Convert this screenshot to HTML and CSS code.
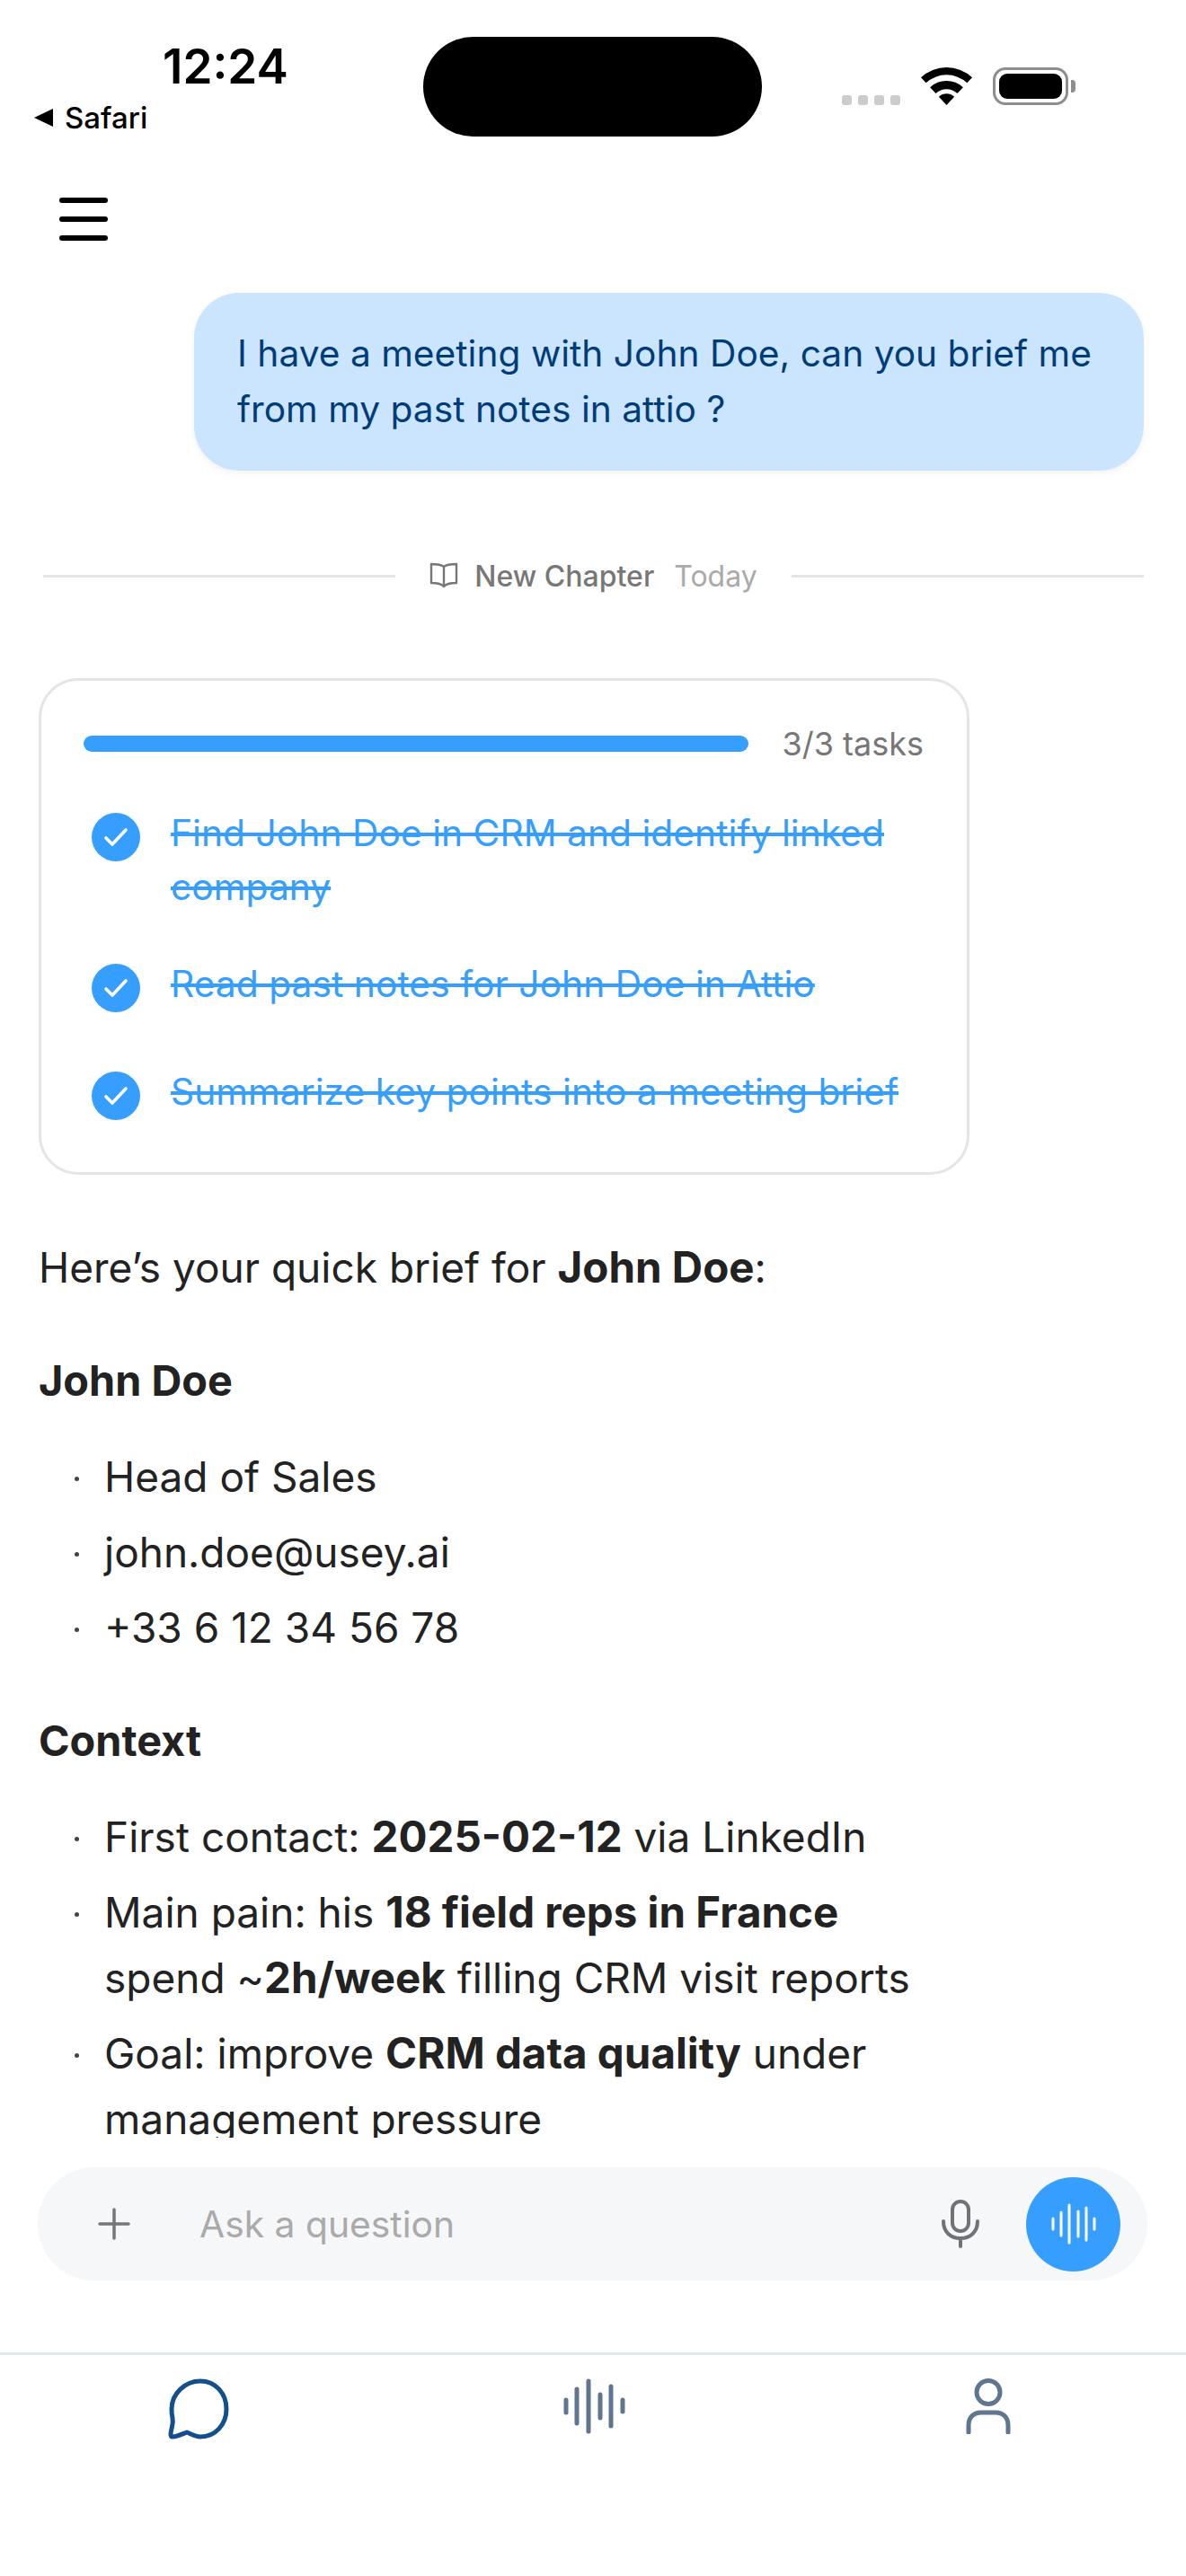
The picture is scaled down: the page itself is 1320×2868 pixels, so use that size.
FILE: index.html
```html
<!DOCTYPE html>
<html lang="en">
<head>
  <meta charset="UTF-8">
  <title>Chat</title>
  <link rel="stylesheet" href="styles.css">
</head>
<body>
  <div class="phone">
    <!-- Status bar -->
    <div class="status-bar">
      <div class="status-left">
        <div class="status-time">12:24</div>
        <div class="status-back"><span class="back-arrow"></span>Safari</div>
      </div>
      <div class="island"></div>
      <div class="status-right">
        <div class="signal"><span></span><span></span><span></span><span></span></div>
        <svg class="wifi" width="57" height="42" viewBox="0 0 57 42">
          <path d="M0 11.2A42 42 0 0 1 57 11.2L51.4 17.3A33.7 33.7 0 0 0 5.6 17.3Z"/>
          <path d="M10.1 22.2A27 27 0 0 1 46.9 22.2L40.5 29A17.7 17.7 0 0 0 16.5 29Z"/>
          <path d="M19.9 32.7A12.7 12.7 0 0 1 37.1 32.7L28.5 42Z"/>
        </svg>
        <div class="battery"><div class="battery-fill"></div></div>
        <div class="battery-nub"></div>
      </div>
    </div>

    <!-- Top bar -->
    <div class="top-bar">
      <div class="menu-btn"><span></span><span></span><span></span></div>
    </div>

    <!-- Conversation -->
    <div class="chat">
      <div class="user-msg">I have a meeting with John Doe, can you brief me from my past notes in attio ?</div>

      <div class="chapter">
        <div class="chapter-line"></div>
        <svg class="chapter-icon" width="32" height="30" viewBox="0 0 32 30" fill="none" stroke="#777" stroke-width="2.4" stroke-linejoin="round" stroke-linecap="round">
          <path d="M16 5C13 2.500 8 2 2 2V23C8 23 13 23.500 16 27C19 23.500 24 23 30 23V2C24 2 19 2.500 16 5ZM16 5V27"/>
        </svg>
        <span class="chapter-name">New Chapter</span>
        <span class="chapter-date">Today</span>
        <div class="chapter-line"></div>
      </div>

      <div class="task-card">
        <div class="task-progress">
          <div class="progress-bar"></div>
          <div class="progress-label">3/3 tasks</div>
        </div>
        <div class="task-row">
          <div class="task-check"><svg width="28" height="22" viewBox="0 0 28 22" fill="none" stroke="#fff" stroke-width="3.600" stroke-linecap="round" stroke-linejoin="round"><path d="M3 12L10 19L25 3"/></svg></div>
          <div class="task-text">Find John Doe in CRM and identify linked company</div>
        </div>
        <div class="task-row">
          <div class="task-check"><svg width="28" height="22" viewBox="0 0 28 22" fill="none" stroke="#fff" stroke-width="3.600" stroke-linecap="round" stroke-linejoin="round"><path d="M3 12L10 19L25 3"/></svg></div>
          <div class="task-text">Read past notes for John Doe in Attio</div>
        </div>
        <div class="task-row">
          <div class="task-check"><svg width="28" height="22" viewBox="0 0 28 22" fill="none" stroke="#fff" stroke-width="3.600" stroke-linecap="round" stroke-linejoin="round"><path d="M3 12L10 19L25 3"/></svg></div>
          <div class="task-text">Summarize key points into a meeting brief</div>
        </div>
      </div>

      <div class="answer">
        <p>Here’s your quick brief for <strong>John Doe</strong>:</p>
        <h3>John Doe</h3>
        <ul>
          <li>Head of Sales</li>
          <li>john.doe@usey.ai</li>
          <li>+33 6 12 34 56 78</li>
        </ul>
        <h3>Context</h3>
        <ul>
          <li>First contact: <strong>2025-02-12</strong> via LinkedIn</li>
          <li>Main pain: his <strong>18 field reps in France</strong> spend ~<strong>2h/week</strong> filling CRM visit reports</li>
          <li>Goal: improve <strong>CRM data quality</strong> under management pressure</li>
        </ul>
      </div>
    </div>

    <!-- Composer -->
    <div class="composer">
      <svg class="plus-icon" width="36" height="36" viewBox="0 0 36 36" stroke="#777" stroke-width="3.500" stroke-linecap="round"><path d="M18 2V34M2 18H34"/></svg>
      <div class="composer-input">Ask a question</div>
      <svg class="mic-icon" width="42" height="54" viewBox="0 0 42 54" fill="none" stroke="#6f7378" stroke-width="4" stroke-linecap="round">
        <rect x="12" y="2" width="18" height="33" rx="9"/>
        <path d="M2 24C2 36 10 43 21 43C32 43 40 36 40 24M21 43V52"/>
      </svg>
      <div class="voice-btn">
        <svg width="50" height="46" viewBox="0 0 50 46" stroke="#fff" stroke-width="3" stroke-linecap="round">
          <path d="M2 17V29M11 10V36M20 2V44M30 9V37M39 5V41M48 17V29"/>
        </svg>
      </div>
    </div>

    <!-- Tab bar -->
    <div class="tab-bar">
      <svg class="tab-icon" width="68" height="68" viewBox="0 0 68 68" fill="none" stroke="#134f8c" stroke-width="5" stroke-linejoin="round">
        <path d="M36 3C53 3 65 17 65 34C65 51 53 65 36 65C30 65 26 62 21 60C16 62 10 65 5 65C2 65 3 60 4 56C5 52 6 49 5 44C4 40 4 37 4 34C4 17 19 3 36 3Z"/>
      </svg>
      <svg class="tab-icon tab-wave" width="70" height="62" viewBox="0 0 70 62" stroke="#5f7590" stroke-width="5" stroke-linecap="round">
        <path d="M3 24V38M15 12V50M28 3V59M41 18V44M53 9V53M66 24V37"/>
      </svg>
      <svg class="tab-icon" width="50" height="62" viewBox="0 0 50 62" fill="none" stroke="#5f7590" stroke-width="5" stroke-linecap="round">
        <circle cx="25" cy="15.500" r="13"/>
        <path d="M3 60V52C3 43 9 38 17 38H33C41 38 47 43 47 52V60"/>
      </svg>
    </div>
  </div>
</body>
</html>
```

FILE: styles.css
```css
:root {
  --blue: #369eff;
  --ink: #222;
  --line: #e5e5e5;
}

html, body {
  margin: 0;
  padding: 0;
  background: #fff;
  font-family: 'Inter', 'Liberation Sans', sans-serif;
  color: var(--ink);
}

.phone {
  width: 1320px;
  height: 2868px;
  display: flex;
  flex-direction: column;
  overflow: hidden;
}

/* Status bar */
.status-bar {
  height: 190px;
  flex-shrink: 0;
  display: flex;
  align-items: flex-start;
}

.status-left {
  width: 471px;
  flex-shrink: 0;
  padding-top: 43px;
  box-sizing: border-box;
}

.status-time {
  margin-left: 181px;
  font-size: 53px;
  line-height: 62px;
  font-weight: 600;
  color: #000;
}

.status-back {
  display: flex;
  align-items: center;
  margin-top: 7px;
  margin-left: 38px;
  font-size: 33px;
  line-height: 38px;
  font-weight: 500;
  color: #000;
}

.back-arrow {
  width: 0;
  height: 0;
  border-top: 10px solid transparent;
  border-bottom: 10px solid transparent;
  border-right: 21px solid #000;
  margin-right: 13px;
}

.island {
  width: 377px;
  height: 111px;
  margin-top: 41px;
  flex-shrink: 0;
  border-radius: 56px;
  background: #000;
}

.status-right {
  display: flex;
  align-items: flex-end;
  margin-top: 75px;
  margin-left: 89px;
  height: 42px;
}

.signal {
  display: flex;
  gap: 7px;
}

.signal span {
  width: 11px;
  height: 11px;
  border-radius: 3px;
  background: #ccc;
}

.wifi {
  margin-left: 23px;
  display: block;
}

.battery {
  width: 84px;
  height: 42px;
  margin-left: 23px;
  box-sizing: border-box;
  padding: 4px;
  border: 3px solid #8e8e8e;
  border-radius: 14px;
}

.battery-fill {
  height: 100%;
  background: #000;
  border-radius: 9px;
}

.battery-nub {
  width: 5px;
  height: 14px;
  margin-left: 3px;
  margin-bottom: 14px;
  background: #8e8e8e;
  border-radius: 0 4px 4px 0;
}

/* Top bar */
.top-bar {
  height: 136px;
  flex-shrink: 0;
  padding-left: 66px;
  padding-top: 30px;
  box-sizing: border-box;
}

.menu-btn {
  width: 54px;
  display: flex;
  flex-direction: column;
  gap: 15px;
}

.menu-btn span {
  height: 6px;
  border-radius: 3px;
  background: #000;
}

/* Conversation */
.chat {
  height: 2054px;
  flex-shrink: 0;
  overflow: hidden;
  padding: 0 47px 0 43px;
  box-sizing: border-box;
}

.user-msg {
  margin-left: 173px;
  height: 198px;
  box-sizing: border-box;
  padding: 37px 48px 0;
  background: #cce5ff;
  border-radius: 50px;
  box-shadow: 0 3px 8px rgba(0, 0, 0, 0.05);
  font-size: 40.7px;
  line-height: 62px;
  color: #003c78;
}

.chapter {
  display: flex;
  align-items: center;
  margin: 96px 0 0 5px;
  height: 42px;
}

.chapter-line {
  flex: 1;
  height: 3px;
  background: var(--line);
}

.chapter-icon {
  margin-left: 38px;
  flex-shrink: 0;
}

.chapter-name {
  margin-left: 18px;
  font-size: 32px;
  font-weight: 500;
  color: #777;
}

.chapter-date {
  margin-left: 22px;
  margin-right: 38px;
  font-size: 32px;
  color: #aaa;
}

/* Task card */
.task-card {
  width: 1036px;
  height: 553px;
  margin-top: 93px;
  box-sizing: border-box;
  padding: 61px 48px 0 47px;
  border: 3px solid var(--line);
  border-radius: 44px;
  background: #fff;
}

.task-progress {
  display: flex;
  align-items: center;
  gap: 38px;
  height: 18px;
}

.progress-bar {
  flex: 1;
  height: 18px;
  border-radius: 9px;
  background: var(--blue);
}

.progress-label {
  font-size: 36px;
  color: #777;
}

.task-row {
  display: flex;
  align-items: flex-start;
  margin-top: 60px;
}

.task-row + .task-row {
  margin-top: 48px;
}

.task-row:last-child {
  margin-top: 58px;
}

.task-check {
  width: 54px;
  height: 54px;
  margin: 8px 0 0 9px;
  flex-shrink: 0;
  display: flex;
  align-items: center;
  justify-content: center;
  border-radius: 50%;
  background: var(--blue);
}

.task-text {
  margin-left: 34px;
  font-size: 40.8px;
  line-height: 60px;
  color: var(--blue);
  text-decoration: line-through;
}

/* Answer */
.answer {
  margin-top: 67px;
  max-width: 1000px;
  font-size: 46px;
  line-height: 73px;
}

.answer p {
  margin: 0;
}

.answer strong {
  font-size: 47.5px;
  line-height: 1;
  font-weight: 700;
}

.answer h3 {
  margin: 53px 0 0;
  font-size: 46.8px;
  line-height: 73px;
  font-weight: 700;
}

.answer ul {
  list-style: none;
  margin: 34px 0 0;
  padding: 0 0 0 73px;
}

.answer li {
  position: relative;
  margin-bottom: 11px;
}

.answer li::before {
  content: '';
  position: absolute;
  left: -33px;
  top: 36px;
  width: 5px;
  height: 5px;
  border-radius: 50%;
  background: #444;
}

/* Composer */
.composer {
  height: 126px;
  margin: 33px 43px 0 42px;
  flex-shrink: 0;
  display: flex;
  align-items: center;
  border-radius: 63px;
  background: #f6f7f9;
}

.plus-icon {
  margin-left: 67px;
  flex-shrink: 0;
}

.composer-input {
  flex: 1;
  margin-left: 77px;
  font-size: 40.8px;
  color: #aaa;
}

.mic-icon {
  flex-shrink: 0;
}

.voice-btn {
  width: 105px;
  height: 105px;
  margin: 0 30px 0 52px;
  flex-shrink: 0;
  display: flex;
  align-items: center;
  justify-content: center;
  border-radius: 50%;
  background: var(--blue);
}

/* Tab bar */
.tab-bar {
  margin-top: 80px;
  flex: 1;
  border-top: 3px solid #e2e8f0;
  display: flex;
  align-items: flex-start;
  padding: 26px 195px 0 187px;
  justify-content: space-between;
}

.tab-wave {
  margin-right: 6px;
}
```
